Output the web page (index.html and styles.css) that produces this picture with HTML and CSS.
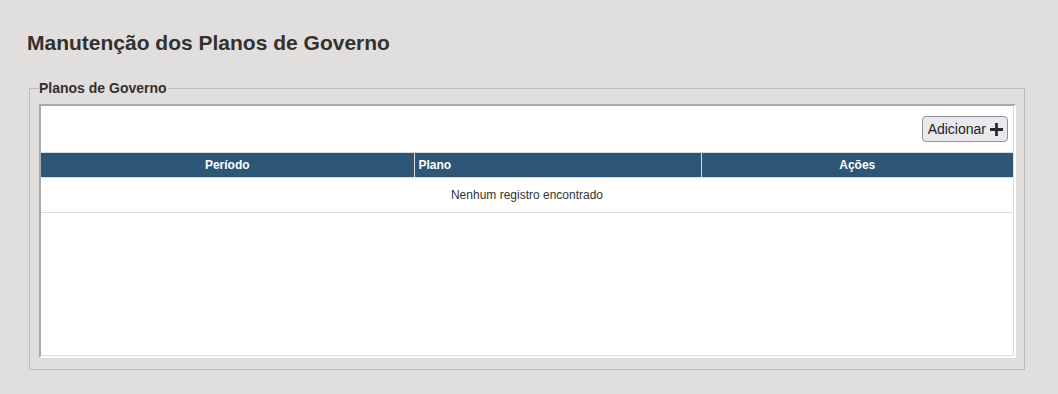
FILE: index.html
```html
<!DOCTYPE html>
<html>
<head>
  <title>Manutenção dos Planos de Governo</title>
  <meta charset="utf-8">
  <link rel="stylesheet" href="styles.css">
</head>
<body>
  <div class="page">
    <h1>Manutenção dos Planos de Governo</h1>

    <fieldset class="group">
      <legend>Planos de Governo</legend>

      <div class="panel">
        <div class="panel-inner">
          <div class="toolbar">
            <button class="btn-add" type="button">
              Adicionar
              <svg viewBox="0 0 14 14" width="13" height="13">
                <path d="M5.5 0h3v5.5H14v3H8.5V14h-3V8.5H0v-3h5.5z"/>
              </svg>
            </button>
          </div>

          <table class="grid">
            <colgroup>
              <col class="col-periodo">
              <col class="col-plano">
              <col>
            </colgroup>
            <thead>
              <tr>
                <th class="center">Período</th>
                <th>Plano</th>
                <th class="center">Ações</th>
              </tr>
            </thead>
            <tbody>
              <tr>
                <td colspan="3" class="empty">Nenhum registro encontrado</td>
              </tr>
            </tbody>
          </table>
        </div>
      </div>
    </fieldset>
  </div>
</body>
</html>
```

FILE: styles.css
```css
body {
  margin: 0;
  background: #e0dfdd;
  font-family: "Liberation Sans", Arial, sans-serif;
  color: #333;
}
.page {
  padding: 31px 0 0 27px;
}
h1 {
  margin: 0 0 25px;
  font-size: 21px;
  line-height: 24px;
  font-weight: bold;
  color: #35302d;
}
.group {
  margin: 0 0 0 2px;
  width: 996px;
  box-sizing: border-box;
  border: 1px solid #bdbdbb;
  padding: 8px 8px 11px 9px;
}
.group legend {
  padding: 0 1px 0 0;
  font-size: 14px;
  line-height: 16px;
  font-weight: bold;
  color: #35302d;
}
.panel {
  border: 2px solid;
  border-color: #a9a9a9 #fff #fff #a9a9a9;
  background: #fff;
  height: 250px;
}
.panel-inner {
  height: 100%;
  box-sizing: border-box;
  border-right: 1px solid #dcdcdc;
  border-bottom: 1px solid #dcdcdc;
}
.toolbar {
  display: flex;
  justify-content: flex-end;
  padding: 10px 5px 10px 0;
}
.btn-add {
  display: flex;
  align-items: center;
  gap: 4px;
  height: 26px;
  padding: 0 4px 0 5px;
  background: #e9e9ed;
  border: 1px solid #8f8f9d;
  border-radius: 4px;
  font-family: "Liberation Sans", Arial, sans-serif;
  font-size: 14px;
  color: #222;
  cursor: pointer;
}
.btn-add svg {
  fill: #2b2b2b;
}
.grid {
  width: 100%;
  border-collapse: collapse;
  table-layout: fixed;
  font-size: 12px;
  border-top: 1px solid #dcdcdc;
}
.col-periodo {
  width: 373px;
}
.col-plano {
  width: 287px;
}
.grid th {
  background: #2d5677;
  color: #fff;
  font-weight: bold;
  text-align: left;
  height: 24px;
  padding: 0 4px;
  border-left: 1px solid #dcdcdc;
  border-bottom: 1px solid #dcdcdc;
}
.grid th:first-child {
  border-left: none;
}
.grid th.center {
  text-align: center;
}
.grid td {
  height: 34px;
  padding: 0 4px;
  border-bottom: 1px solid #dcdcdc;
}
.grid td.empty {
  text-align: center;
  color: #333;
}
```
